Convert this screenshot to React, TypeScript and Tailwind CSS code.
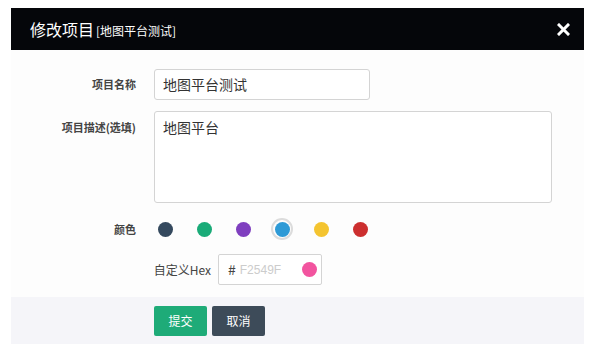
import React from 'react';

const COLORS = ['#34495e', '#1aab78', '#7f3fbf', '#2e9ad6', '#f4c430', '#cc2f2f'];

export default function App() {
  const selected = 3;
  return (
    <div className="w-[596px] h-[358px] bg-white pt-2 px-[11px] font-['Noto_Sans_CJK_SC','Noto_Sans',sans-serif]">
      <div className="w-[573px]">
        <div className="h-[42px] bg-[#05060a] flex items-center justify-between pl-[19px] pr-[14px]">
          <div className="flex items-baseline text-white">
            <span className="text-[16px]">修改项目</span>
            <span className="text-[12px] ml-[2px]">[地图平台测试]</span>
          </div>
          <svg width="13" height="13" viewBox="0 0 13 13">
            <path d="M2 2 L11 11 M11 2 L2 11" stroke="#fff" strokeWidth="3" strokeLinecap="square" />
          </svg>
        </div>
        <div className="bg-[#fdfdfd] pt-[19px] pb-[12px] text-[#333]">
          <div className="flex items-center">
            <div className="w-[125px] text-right text-[11px] font-bold text-[#444]">项目名称</div>
            <div className="ml-[18px] w-[216px] h-[31px] border border-[#d4d4d4] rounded-[3px] bg-white flex items-center px-[8px] text-[14px]">
              地图平台测试
            </div>
          </div>
          <div className="flex mt-[11px]">
            <div className="w-[125px] text-right text-[11px] font-bold text-[#444] pt-[8px]">项目描述(选填)</div>
            <div className="ml-[18px] w-[398px] h-[92px] border border-[#d4d4d4] rounded-[3px] bg-white px-[8px] pt-[5px] text-[14px]">
              地图平台
            </div>
          </div>
          <div className="flex items-center mt-[15px]">
            <div className="w-[125px] text-right text-[11px] font-bold text-[#444]">颜色</div>
            <div className="ml-[18px] flex items-center gap-[17px]">
              {COLORS.map((c, i) => (
                <div
                  key={c}
                  className={
                    i === selected
                      ? 'w-[22px] h-[22px] rounded-full border-2 border-[#dcdcdc] flex items-center justify-center'
                      : 'w-[22px] h-[22px] flex items-center justify-center'
                  }
                >
                  <div className="w-[15px] h-[15px] rounded-full" style={{ backgroundColor: c }} />
                </div>
              ))}
            </div>
          </div>
          <div className="flex items-center mt-[14px]">
            <div className="w-[200px] text-right text-[12px] text-[#444]">自定义Hex</div>
            <div className="ml-[7px] w-[104px] h-[31px] border border-[#d4d4d4] rounded-[2px] bg-white flex items-center pl-[9px] pr-[4px]">
              <span className="text-[14px] text-[#444]">#</span>
              <span className="ml-[4px] text-[12px] text-[#ccc] font-['Liberation_Sans',sans-serif]">F2549F</span>
              <div className="ml-auto w-[15px] h-[15px] rounded-full bg-[#f2549f]" />
            </div>
          </div>
        </div>
        <div className="h-[47px] bg-[#f5f5f9] flex items-center pl-[143px] gap-[5px]">
          <div className="w-[53px] h-[30px] rounded-[2px] bg-[#1eab78] text-white text-[12px] flex items-center justify-center">提交</div>
          <div className="w-[53px] h-[30px] rounded-[2px] bg-[#3d4b59] text-white text-[12px] flex items-center justify-center">取消</div>
        </div>
      </div>
    </div>
  );
}
